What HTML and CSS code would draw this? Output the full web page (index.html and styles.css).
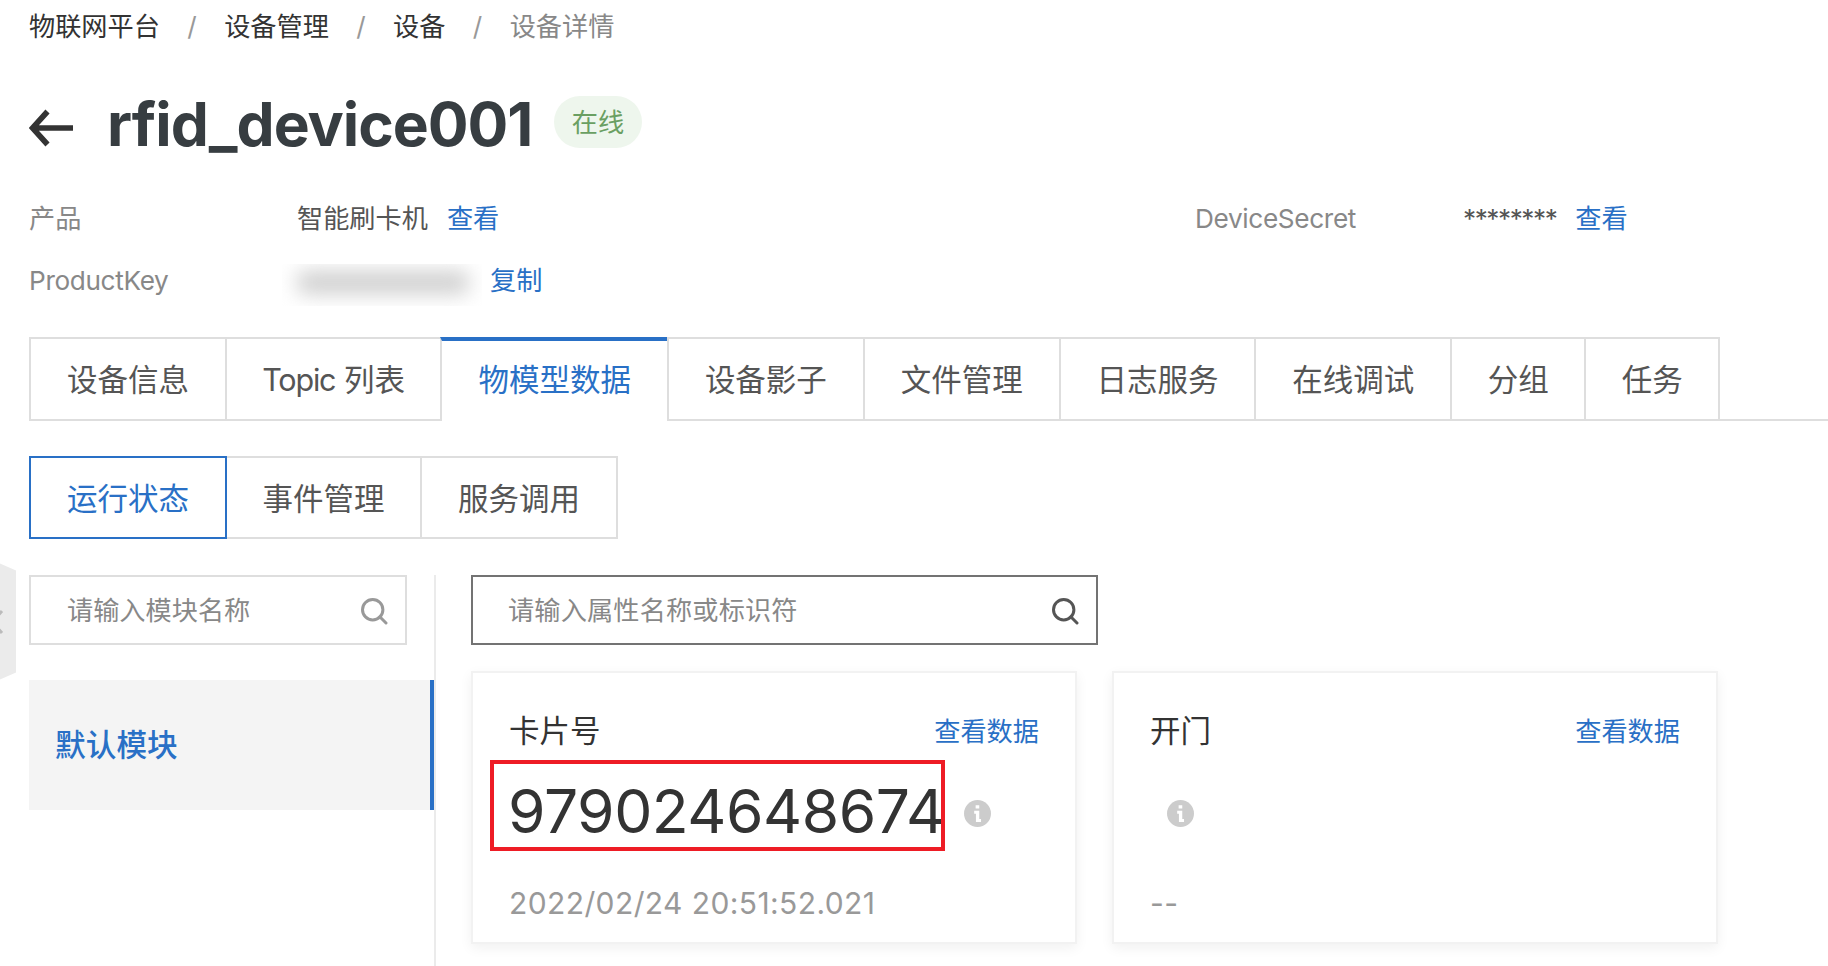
FILE: index.html
```html
<!DOCTYPE html>
<html lang="zh-CN">
<head>
<meta charset="utf-8">
<title>设备详情</title>
<link rel="stylesheet" href="styles.css">
</head>
<body>
<svg class="defs" width="0" height="0" aria-hidden="true">
  <symbol id="search" viewBox="0 0 27 27">
    <circle cx="11.7" cy="11.7" r="10.2" fill="none" stroke="currentColor" stroke-width="3"/>
    <path d="M18.8 18.8 25 25" fill="none" stroke="currentColor" stroke-width="3" stroke-linecap="round"/>
  </symbol>
  <symbol id="info" viewBox="0 0 26 26">
    <circle cx="13" cy="13" r="13" fill="#ccc"/>
    <path d="M11.2 5h3.5v3.2h-3.5zM9.8 10.3h4.9v8h1.7v3h-4.9v-8H9.8z" fill="#fff"/>
  </symbol>
</svg>
<svg class="handle" width="16" height="118" viewBox="0 0 16 118">
  <path d="M0 0.500 16 7.500V109.500L0 116.500Z" fill="#ebebeb"/>
  <path d="M2 48-8 59 2 70" fill="none" stroke="#bbb" stroke-width="3"/>
</svg>
<main class="page">
  <nav class="breadcrumb">
    <a>物联网平台</a><i>/</i><a>设备管理</a><i>/</i><a>设备</a><i>/</i><span>设备详情</span>
  </nav>
  <header class="header">
    <svg class="back" width="44" height="38" viewBox="0 0 44 38"><path d="M3 19H44M18.500 2.500 3.500 19 18.500 35.500" fill="none" stroke="#333" stroke-width="5.600"/></svg>
    <h1 class="title">rfid_device001</h1>
    <span class="status">在线</span>
  </header>
  <dl class="info">
    <dt>产品</dt><dd>智能刷卡机<a class="link">查看</a></dd>
    <dt class="latin">DeviceSecret</dt><dd><span class="stars">********</span><a class="link">查看</a></dd>
    <dt class="latin">ProductKey</dt><dd class="key"><span class="masked"><b></b></span><a class="link">复制</a></dd>
  </dl>
  <div class="tabs">
    <a class="tab">设备信息</a><a class="tab topic"><span>Topic</span> 列表</a><a class="tab active">物模型数据</a><a class="tab">设备影子</a><a class="tab">文件管理</a><a class="tab">日志服务</a><a class="tab">在线调试</a><a class="tab short">分组</a><a class="tab short">任务</a><span class="rest"></span>
  </div>
  <div class="segments">
    <a class="segment current">运行状态</a><a class="segment">事件管理</a><a class="segment">服务调用</a>
  </div>
  <div class="content">
    <aside class="side">
      <div class="search"><span>请输入模块名称</span><svg class="glass"><use href="#search"/></svg></div>
      <div class="module">默认模块</div>
    </aside>
    <section class="data">
      <div class="search wide"><span>请输入属性名称或标识符</span><svg class="glass"><use href="#search"/></svg></div>
      <div class="cards">
        <article class="card">
          <div class="card-head"><span>卡片号</span><a class="link">查看数据</a></div>
          <div class="value"><span class="number">979024648674</span><svg class="tip"><use href="#info"/></svg></div>
          <div class="time">2022/02/24 20:51:52.021</div>
          <div class="mark"></div>
        </article>
        <article class="card">
          <div class="card-head"><span>开门</span><a class="link">查看数据</a></div>
          <div class="value empty"><svg class="tip"><use href="#info"/></svg></div>
          <div class="time">--</div>
        </article>
      </div>
    </section>
  </div>
</main>
</body>
</html>
```
FILE: styles.css
```css
* { box-sizing: border-box; }
body {
  margin: 0;
  height: 966px;
  overflow: hidden;
  position: relative;
  background: #fff;
  color: #555;
  font: 26.2px/52px Inter, "Noto Sans CJK SC", sans-serif;
  white-space: nowrap;
}
.defs { position: absolute; }
.page { display: flex; flex-direction: column; height: 966px; padding-left: 29px; }
.link { color: #2970c6; }
.handle { position: absolute; left: 0; top: 563px; }

.breadcrumb { display: flex; height: 52px; color: #333; line-height: 53px; }
.breadcrumb i { width: 64.200px; text-align: center; font-style: normal; color: #999; }
.breadcrumb span { color: #888; }

.header { display: flex; height: 52px; margin-top: 44px; }
.back { margin-top: 13px; }
.title { margin: 0 0 0 34px; width: 447px; font-size: 60.500px; line-height: 56px; font-weight: 700; letter-spacing: -1.050px; color: #373d41; }
.status { width: 88px; height: 52px; border-radius: 26px; background: #eef6ed; color: #6a9f62; text-align: center; line-height: 54px; }

.info { display: grid; grid-template-columns: 268px 898px 268px 1fr; grid-template-rows: 62px 62px; line-height: 62px; margin: 40px 0 25px; }
.info dt { color: #888; }
.info dd { margin: 0; display: flex; }
.info .link { margin-left: 19px; }
.latin { letter-spacing: -0.350px; }
.stars { letter-spacing: -1.450px; }
.masked { width: 200px; height: 42px; margin: 14px 0 0 -15px; overflow: hidden; padding: 7px 15px; }
.masked b { display: block; width: 172px; height: 23px; border-radius: 8px; background: #cfcfcf; filter: blur(10px); }
.info .key .link { margin-left: 8px; }

.tabs { display: flex; height: 84px; font-size: 30.500px; line-height: 84px; }
.tab { width: 195.800px; border: solid #dedede; border-width: 2px 0 2px 2px; text-align: center; line-height: 82px; }
.tab.topic { width: 215.600px; }
.topic span { letter-spacing: -1.200px; }
.tab.active { width: 226.600px; border-top: 4px solid #2970c6; border-left-width: 2px; border-bottom: 0; color: #2970c6; line-height: 78px; }
.tab.short { width: 134px; }
.rest { flex: 1; border-left: 2px solid #dedede; border-bottom: 2px solid #dedede; }

.segments { display: flex; height: 83px; margin-top: 35px; font-size: 30.500px; line-height: 82px; }
.segment { width: 195px; border: 2px solid #dedede; border-left: 0; text-align: center; }
.segment.current { width: 198px; border: 2px solid #2970c6; color: #2970c6; }
.segment:last-child { width: 196px; }

.content { display: flex; flex: 1; margin-top: 36px; }
.side { width: 407px; border-right: 2px solid #ebebeb; }
.search { display: flex; justify-content: space-between; align-items: center; width: 378px; height: 70px; border: 2px solid #dedede; padding: 0 17px 0 36px; color: #888; line-height: 54px; }
.search span { margin-top: 1px; }
.glass { width: 27px; height: 27px; margin-top: 2px; color: #999; }
.module { height: 130px; margin-top: 35px; padding-left: 26px; border-right: 4px solid #2970c6; background: #f4f4f4; color: #2970c6; font-size: 30.700px; font-weight: 500; line-height: 130px; }
.data { margin-left: 35px; }
.search.wide { width: 627px; border-color: #737373; padding-left: 35px; }
.wide span { letter-spacing: 0.150px; }
.wide .glass { color: #555; }
.cards { display: flex; gap: 35px; margin-top: 26px; }
.card { position: relative; width: 606px; height: 273px; border: 2px solid #f2f2f2; padding: 32px 36px 0; box-shadow: 0 4px 12px rgba(0, 0, 0, .06); }
.card-head { display: flex; justify-content: space-between; color: #333; font-size: 30.500px; line-height: 51px; height: 52px; }
.card-head .link { font-size: 26.200px; line-height: 53px; }
.value { display: flex; height: 72px; margin-top: 19px; }
.number { width: 439px; margin-left: -1px; color: #333; font-size: 60.500px; line-height: 70px; letter-spacing: -0.450px; }
.tip { width: 27px; height: 27px; margin: 24px 0 0 17px; }
.time { margin-top: 29px; color: #999; font-size: 30px; line-height: 52px; letter-spacing: 0.400px; }
.mark { position: absolute; left: 17px; top: 87px; width: 455px; height: 91px; border: 4px solid #ee1c25; }
```
